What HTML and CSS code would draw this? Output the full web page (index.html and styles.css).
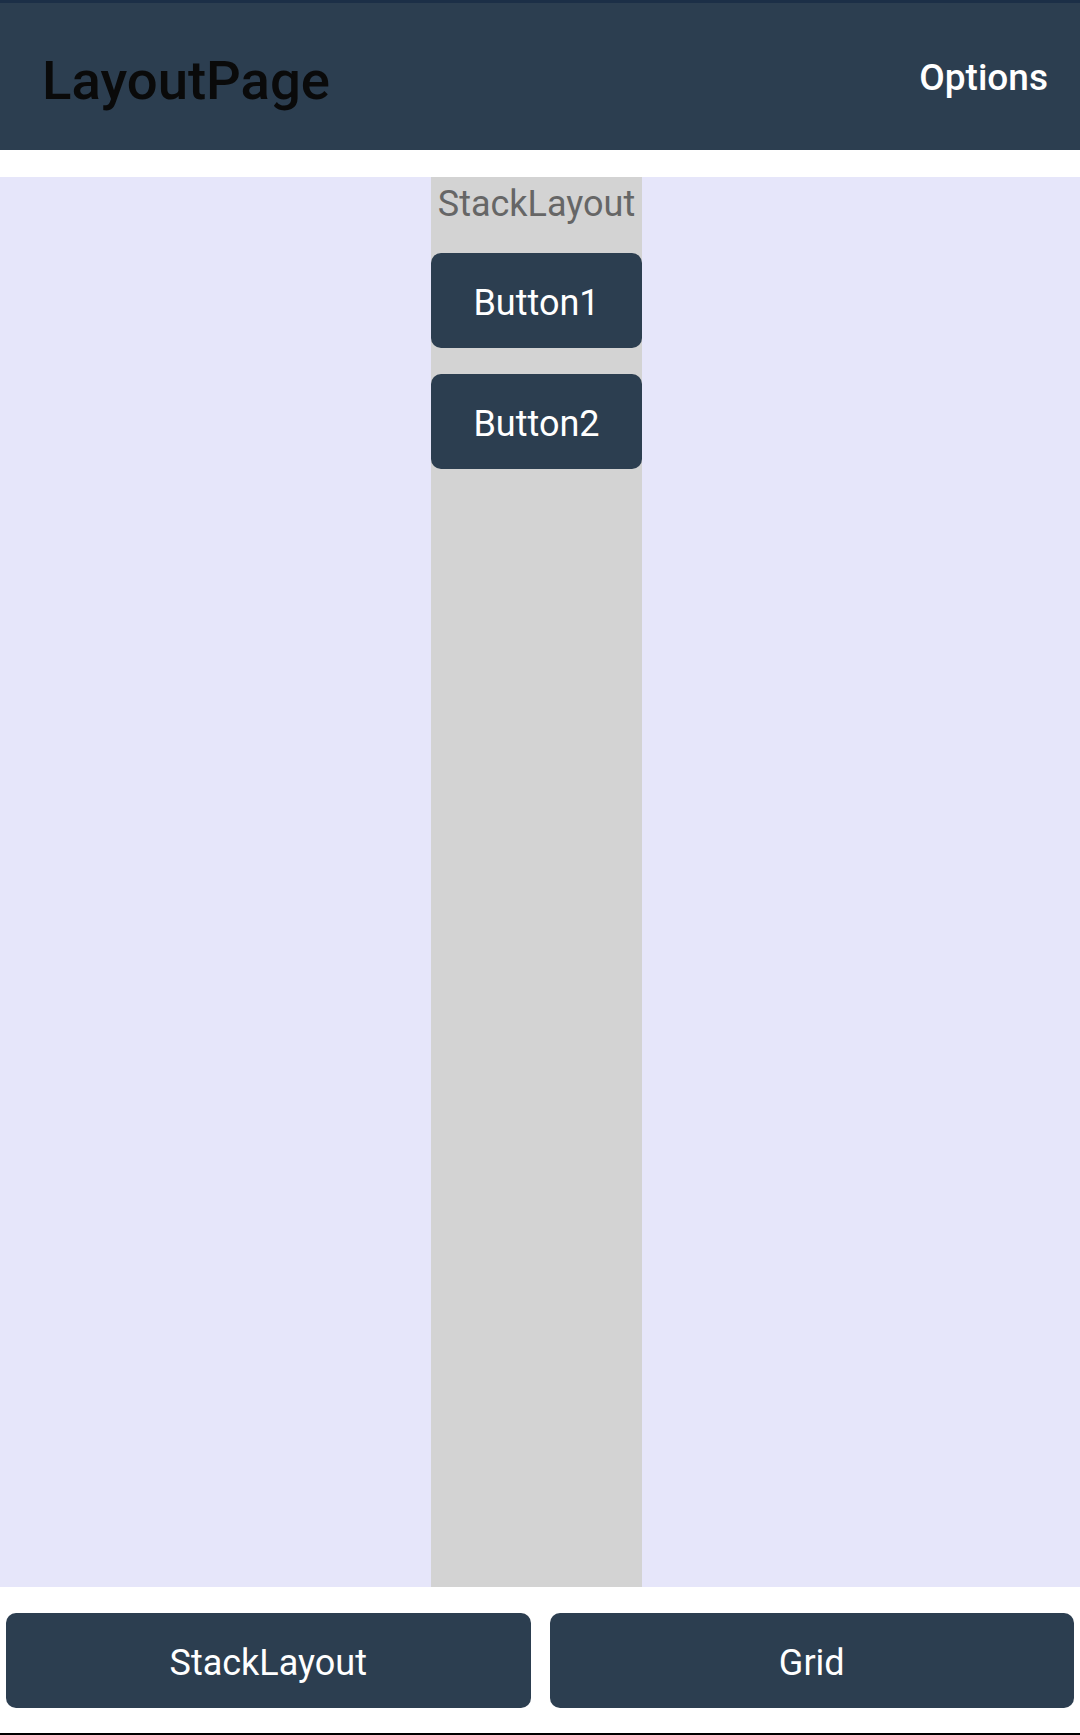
FILE: index.html
```html
<!DOCTYPE html>
<html>
<head>
<meta charset="utf-8">
<link rel="stylesheet" href="styles.css">
</head>
<body>
<div class="app">
  <header class="topbar">
    <div class="title">LayoutPage</div>
    <div class="options">Options</div>
  </header>
  <main class="content">
    <div class="stack">
      <div class="stack-label">StackLayout</div>
      <div class="btn stack-btn">Button1</div>
      <div class="btn stack-btn">Button2</div>
    </div>
  </main>
  <footer class="bottombar">
    <div class="btn bottom-btn">StackLayout</div>
    <div class="btn bottom-btn">Grid</div>
  </footer>
</div>
</body>
</html>
```
FILE: styles.css
```css
html, body {
  margin: 0;
  padding: 0;
  background: #ffffff;
}
body {
  font-family: Roboto, "Liberation Sans", sans-serif;
}
.app {
  width: 1080px;
  height: 1735px;
  display: flex;
  flex-direction: column;
  box-sizing: border-box;
  border-bottom: 2px solid #000000;
}
.topbar {
  flex: 0 0 auto;
  height: 147px;
  border-top: 3px solid #1c2f47;
  background: #2c3e50;
  display: flex;
  justify-content: space-between;
  align-items: flex-start;
  padding: 0 32px 0 42px;
}
.title {
  margin-top: 46px;
  font-size: 54.5px;
  line-height: 62px;
  font-weight: 500;
  color: #0a0a0a;
}
.options {
  margin-top: 52px;
  font-size: 37px;
  line-height: 45px;
  font-weight: 500;
  color: #ffffff;
}
.content {
  margin-top: 27px;
  height: 1410px;
  background: #e6e6fa;
  display: flex;
}
.stack {
  margin-left: 431px;
  width: 211px;
  background: #d3d3d3;
  display: flex;
  flex-direction: column;
}
.stack-label {
  padding-top: 7px;
  margin-bottom: 28px;
  font-size: 36px;
  line-height: 41px;
  color: #666666;
  text-align: center;
  white-space: nowrap;
}
.btn {
  background: #2c3e50;
  color: #ffffff;
  border-radius: 10px;
  height: 95px;
  box-sizing: border-box;
  padding-top: 5px;
  display: flex;
  align-items: center;
  justify-content: center;
  font-size: 36px;
  line-height: 41px;
}
.stack-btn + .stack-btn {
  margin-top: 26px;
}
.bottombar {
  display: flex;
  gap: 19px;
  padding: 26px 6px 0 6px;
}
.bottom-btn {
  flex: 1 1 0;
}
```
